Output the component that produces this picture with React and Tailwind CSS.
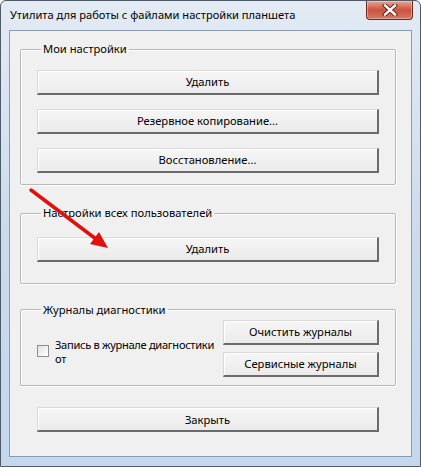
import React from "react";

const btn =
  "h-[25px] w-full bg-gradient-to-b from-[#f6f6f6] to-[#ebebeb] border border-t-[#dadada] border-l-[#dadada] border-b-2 border-r-2 border-b-[#6b6b6b] border-r-[#6b6b6b] shadow-[inset_1px_1px_0_#ffffff] text-[11.2px] text-black leading-none";

const group = "border border-[#b8b8b8] rounded-[2px] shadow-[inset_1px_1px_0_#ffffff,1px_1px_0_#ffffff]";
const legend = "ml-[4px] px-[2px] text-[11.2px] leading-[16px] text-black";

export default function App() {
  return (
    <div
      className="relative w-[421px] h-[467px] flex flex-col rounded-t-[6px] border border-[#4f5b69] bg-gradient-to-b from-[#e3ebf4] via-[#cbdbec] to-[#c3d7ee]"
      style={{ fontFamily: '"Noto Sans", "Open Sans", sans-serif' }}
    >
      {/* title bar */}
      <div className="h-[29px] flex items-start justify-between">
        <div className="h-[29px] flex items-center pl-[9px] text-[11.1px] text-black">
          Утилита для работы с файлами настройки планшета
        </div>
        <CloseButton />
      </div>

      {/* client area */}
      <div className="flex-1 mx-[8px] mb-[9px] border border-[#8b9cb1] bg-[#f0f0f0] pl-[10px] pr-[15px]">
        <fieldset className={`mt-[10px] px-[16px] pt-[13px] pb-[11px] ${group}`}>
          <legend className={legend}>Мои настройки</legend>
          <div className="flex flex-col gap-[14px]">
            <button className={btn}>Удалить</button>
            <button className={btn}>Резервное копирование...</button>
            <button className={btn}>Восстановление...</button>
          </div>
        </fieldset>

        <fieldset className={`mt-[20px] px-[16px] pt-[14px] pb-[21px] ${group}`}>
          <legend className={legend}>Настройки всех пользователей</legend>
          <button className={btn}>Удалить</button>
        </fieldset>

        <fieldset className={`mt-[18px] pl-[16px] pr-[16px] pt-[2px] pb-[8px] ${group}`}>
          <legend className={legend}>Журналы диагностики</legend>
          <div className="flex">
            <label className="flex-1 min-w-0 flex items-start gap-[6px] pt-[18px]">
              <span className="mt-[7px] w-[12px] h-[12px] border border-[#8f8f8f] bg-gradient-to-br from-[#e2e2e2] to-white shrink-0" />
              <span className="text-[11.1px] leading-[14px] tracking-[-0.3px] text-black whitespace-nowrap">
                Запись в журнале диагностики
                <br />
                от
              </span>
            </label>
            <div className="w-[156px] shrink-0 flex flex-col gap-[7px]">
              <button className={btn}>Очистить журналы</button>
              <button className={btn}>Сервисные журналы</button>
            </div>
          </div>
        </fieldset>

        <div className="mt-[20px] px-[17px]">
          <button className={btn}>Закрыть</button>
        </div>
      </div>

      {/* red annotation arrow */}
      <svg
        className="absolute left-0 top-0 pointer-events-none"
        width="421"
        height="467"
        viewBox="0 0 421 467"
      >
        <line x1="30" y1="189" x2="95" y2="238" stroke="#e0100c" strokeWidth="3.5" strokeLinecap="round" />
        <polygon points="107,247 89,243 98,231" fill="#e0100c" />
      </svg>
    </div>
  );
}

function CloseButton() {
  return (
    <div className="mr-[7px] w-[47px] h-[19px] rounded-b-[4px] border border-t-0 border-[#6a2a20] bg-gradient-to-b from-[#e8a494] via-[#c9533e] to-[#d77863] shadow-[inset_0_0_0_1px_rgba(255,255,255,0.35)] flex items-center justify-center">
      <svg width="16" height="12" viewBox="0 0 16 12">
        <path d="M3 1.5 L13 10.5 M13 1.5 L3 10.5" stroke="#5a1c12" strokeWidth="4.2" strokeLinecap="square" />
        <path d="M3 1.5 L13 10.5 M13 1.5 L3 10.5" stroke="#ffffff" strokeWidth="2.4" strokeLinecap="square" />
      </svg>
    </div>
  );
}
